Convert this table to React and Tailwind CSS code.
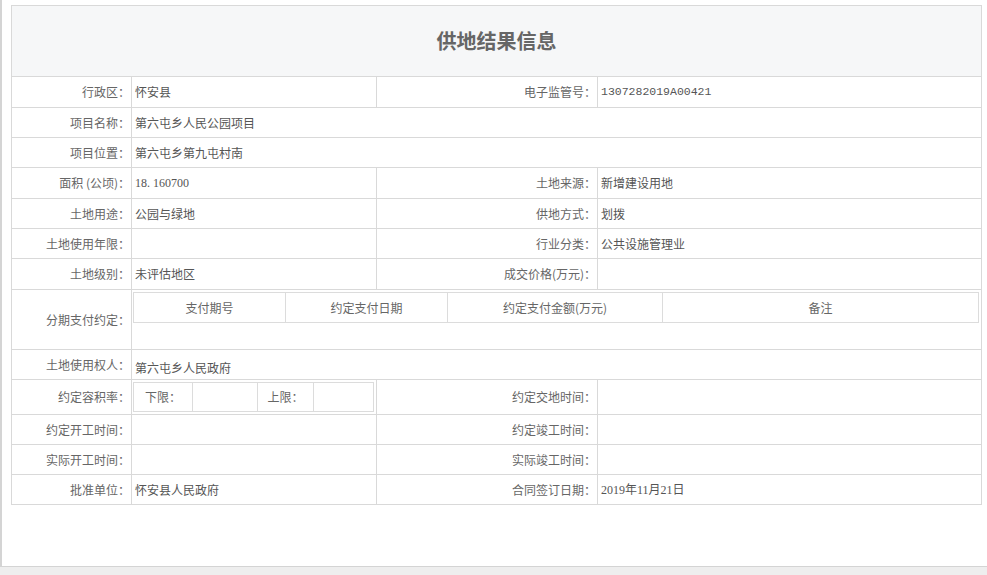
import React from "react";

const cjk = "font-['Noto_Sans_CJK_SC','Noto_Sans',sans-serif]";

const label = "text-right pr-[1px] text-[#666] whitespace-nowrap";
const value = "pl-[3px] text-[#555] whitespace-nowrap";
const cell = "border border-[#d9d9d9] p-0";

function Row({ h = "h-[30px]", children }) {
  return <tr className={h}>{children}</tr>;
}

export default function App() {
  return (
    <div className={`w-[987px] h-[575px] bg-[#eeeeee] ${cjk} text-[12px] leading-none`}>
      <div className="h-[567px] bg-white border-l-2 border-b border-[#d4d4d4] pt-[5px] pl-[9px]">
        <table className="w-[970px] border-collapse table-fixed">
          <colgroup>
            <col className="w-[120px]" />
            <col className="w-[245px]" />
            <col className="w-[221px]" />
            <col className="w-[384px]" />
          </colgroup>
          <tbody>
            <tr className="h-[71px]">
              <td
                colSpan={4}
                className={`${cell} bg-[#f6f7f8] text-center text-[20px] font-bold text-[#666]`}
              >
                供地结果信息
              </td>
            </tr>

            <Row h="h-[31px]">
              <td className={`${cell} ${label}`}>行政区：</td>
              <td className={`${cell} ${value}`}>怀安县</td>
              <td className={`${cell} ${label}`}>电子监管号：</td>
              <td className={`${cell} ${value} font-['Liberation_Mono',monospace] text-[11.5px]`}>
                1307282019A00421
              </td>
            </Row>

            <Row>
              <td className={`${cell} ${label}`}>项目名称：</td>
              <td colSpan={3} className={`${cell} ${value}`}>第六屯乡人民公园项目</td>
            </Row>

            <Row>
              <td className={`${cell} ${label}`}>项目位置：</td>
              <td colSpan={3} className={`${cell} ${value}`}>第六屯乡第九屯村南</td>
            </Row>

            <Row h="h-[31px]">
              <td className={`${cell} ${label}`}>面积 (公顷)：</td>
              <td className={`${cell} ${value} font-['Liberation_Serif',serif]`}>18. 160700</td>
              <td className={`${cell} ${label}`}>土地来源：</td>
              <td className={`${cell} ${value}`}>新增建设用地</td>
            </Row>

            <Row>
              <td className={`${cell} ${label}`}>土地用途：</td>
              <td className={`${cell} ${value}`}>公园与绿地</td>
              <td className={`${cell} ${label}`}>供地方式：</td>
              <td className={`${cell} ${value}`}>划拨</td>
            </Row>

            <Row>
              <td className={`${cell} ${label}`}>土地使用年限：</td>
              <td className={`${cell} ${value}`}></td>
              <td className={`${cell} ${label}`}>行业分类：</td>
              <td className={`${cell} ${value}`}>公共设施管理业</td>
            </Row>

            <Row h="h-[31px]">
              <td className={`${cell} ${label}`}>土地级别：</td>
              <td className={`${cell} ${value}`}>未评估地区</td>
              <td className={`${cell} ${label}`}>成交价格(万元)：</td>
              <td className={`${cell} ${value}`}></td>
            </Row>

            <Row h="h-[60px]">
              <td className={`${cell} ${label}`}>分期支付约定：</td>
              <td colSpan={3} className={`${cell} align-top pt-[2px] pl-[1px] pr-[2px]`}>
                <table className="w-full border-collapse table-fixed text-[#666]">
                  <colgroup>
                    <col className="w-[152px]" />
                    <col className="w-[162px]" />
                    <col className="w-[215px]" />
                    <col />
                  </colgroup>
                  <tbody>
                    <tr className="h-[30px]">
                      <td className="border border-[#dcdcdc] text-center">支付期号</td>
                      <td className="border border-[#dcdcdc] text-center">约定支付日期</td>
                      <td className="border border-[#dcdcdc] text-center">约定支付金额(万元)</td>
                      <td className="border border-[#dcdcdc] text-center">备注</td>
                    </tr>
                  </tbody>
                </table>
              </td>
            </Row>

            <Row>
              <td className={`${cell} ${label}`}>土地使用权人：</td>
              <td colSpan={3} className={`${cell} ${value} pt-[7px]`}>第六屯乡人民政府</td>
            </Row>

            <Row h="h-[35px]">
              <td className={`${cell} ${label}`}>约定容积率：</td>
              <td className={`${cell} pl-[1px]`}>
                <table className="w-[240px] border-collapse table-fixed text-[#666]">
                  <colgroup>
                    <col className="w-[59px]" />
                    <col className="w-[65px]" />
                    <col className="w-[56px]" />
                    <col className="w-[60px]" />
                  </colgroup>
                  <tbody>
                    <tr className="h-[29px]">
                      <td className="border border-[#dcdcdc] text-center">下限：</td>
                      <td className="border border-[#dcdcdc]"></td>
                      <td className="border border-[#dcdcdc] text-center">上限：</td>
                      <td className="border border-[#dcdcdc]"></td>
                    </tr>
                  </tbody>
                </table>
              </td>
              <td className={`${cell} ${label}`}>约定交地时间：</td>
              <td className={`${cell} ${value}`}></td>
            </Row>

            <Row>
              <td className={`${cell} ${label}`}>约定开工时间：</td>
              <td className={`${cell} ${value}`}></td>
              <td className={`${cell} ${label}`}>约定竣工时间：</td>
              <td className={`${cell} ${value}`}></td>
            </Row>

            <Row>
              <td className={`${cell} ${label}`}>实际开工时间：</td>
              <td className={`${cell} ${value}`}></td>
              <td className={`${cell} ${label}`}>实际竣工时间：</td>
              <td className={`${cell} ${value}`}></td>
            </Row>

            <Row>
              <td className={`${cell} ${label}`}>批准单位：</td>
              <td className={`${cell} ${value}`}>怀安县人民政府</td>
              <td className={`${cell} ${label}`}>合同签订日期：</td>
              <td className={`${cell} ${value} font-['Liberation_Serif','Noto_Sans_CJK_SC',serif]`}>
                2019年11月21日
              </td>
            </Row>
          </tbody>
        </table>
      </div>
    </div>
  );
}
